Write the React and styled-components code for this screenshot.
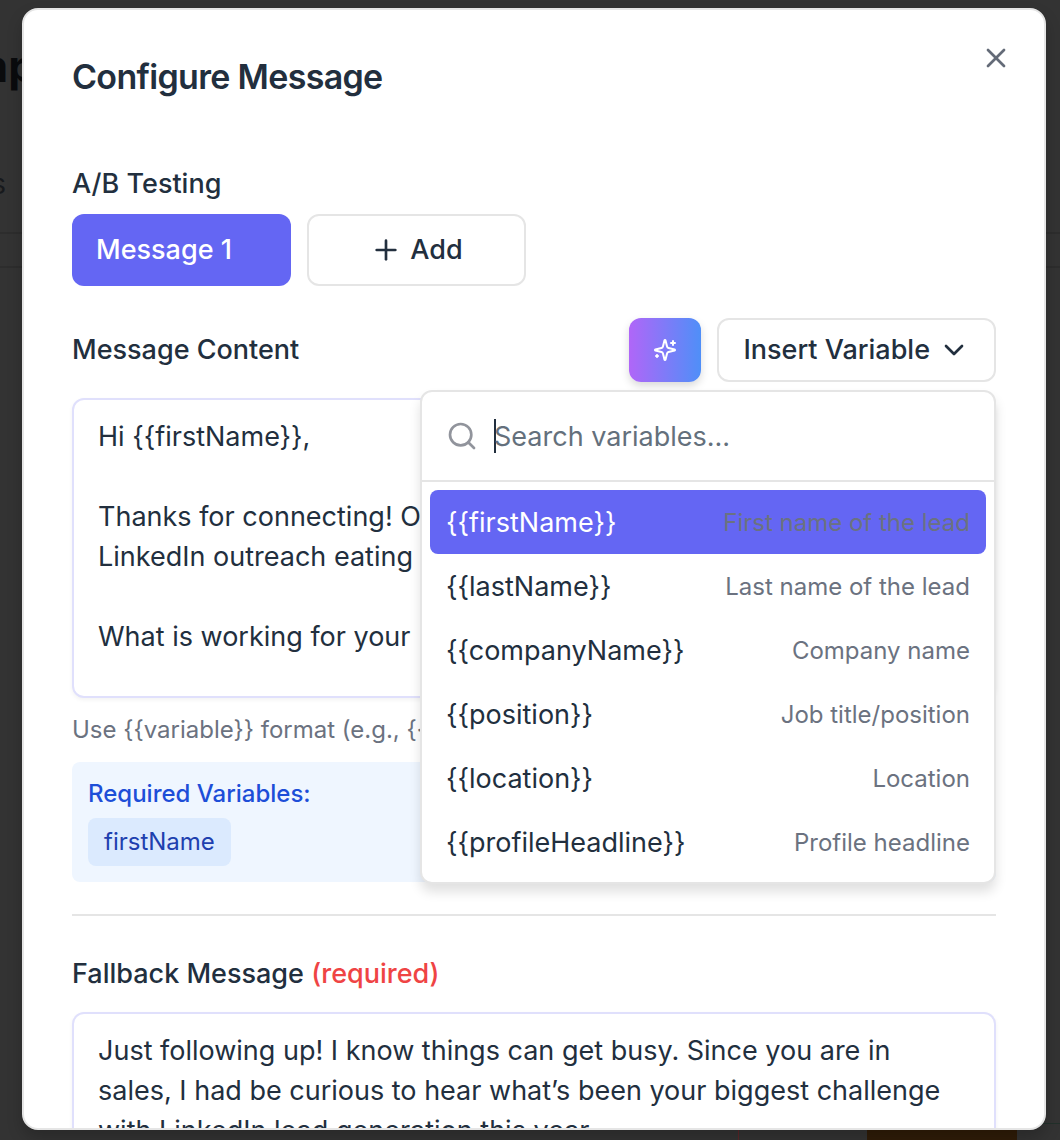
import React, { useState } from "react";
import styled, { createGlobalStyle, css } from "styled-components";
import { ChevronDown, Plus, Search, X } from "lucide-react";

const GlobalStyle = createGlobalStyle`
    *, *::before, *::after {
        box-sizing: border-box;
    }

    body {
        margin: 0;
        background: #333333;
        font-family: Inter, "Noto Sans", sans-serif;
        color: #222f3e;
    }

    button, input, textarea {
        font: inherit;
        color: inherit;
    }
`;

const Screen = styled.div`
    position: relative;
    height: 100vh;
    overflow: hidden;
    background: #333333;
`;

/* dimmed page that shows around the dialog */
const Backdrop = styled.div`
    position: absolute;
    inset: 0;
    overflow: hidden;
`;

const PageTitle = styled.div`
    display: flex;
    justify-content: flex-end;
    width: 36px;
    margin-top: 36px;
    color: #0a0b0d;
    font-size: 44px;
    line-height: 60px;
    font-weight: 700;
`;

const PageText = styled.div`
    display: flex;
    justify-content: flex-end;
    width: 6px;
    margin-top: 72px;
    color: #17191c;
    font-size: 28px;
    line-height: 32px;
`;

const PageRow = styled.div`
    height: 34px;
    border-top: 2px solid #2d2d2d;

    &:first-of-type {
        margin-top: 32px;
    }
`;

const PageTable = styled.section`
    display: flow-root;
`;

const PageFooter = styled.div`
    position: absolute;
    right: 0;
    bottom: 0;
    display: flex;
    justify-content: flex-end;
    width: 322px;
    height: 17px;
    padding-right: 43px;
    border-top: 1px solid #22302a;
    border-left: 1px solid #5c2528;
`;

const PageAction = styled.div`
    width: 150px;
    background: #2f1c08;
`;

const Overlay = styled.div`
    position: relative;
    display: flex;
    height: 100%;
    padding: 8px 14px 10px 22px;
`;

const Dialog = styled.section`
    position: relative;
    flex: 1;
    padding: 48px;
    overflow: hidden;
    background: #ffffff;
    border: 2px solid #e5e5e5;
    border-radius: 16px;
    box-shadow: 0 8px 16px rgba(0, 0, 0, 0.2);
`;

const CloseButton = styled.button`
    position: absolute;
    top: 32px;
    right: 32px;
    display: flex;
    padding: 0;
    background: none;
    border: 0;
    color: #646b78;
`;

const Title = styled.h2`
    margin: 0 0 74px;
    font-size: 34px;
    line-height: 38px;
    font-weight: 600;
    letter-spacing: -0.02em;
`;

const Label = styled.label`
    display: block;
    font-size: 27px;
    line-height: 28px;
    font-weight: 500;
`;

const Required = styled.span`
    color: #ef4444;
`;

const Tabs = styled.div`
    display: grid;
    grid-template-columns: repeat(4, 1fr);
    gap: 16px;
    margin: 16px 0 32px;
`;

const outline = css`
    background: #ffffff;
    border: 2px solid #e5e5e5;
`;

const Button = styled.button`
    display: flex;
    align-items: center;
    justify-content: center;
    gap: 8px;
    height: 64px;
    padding: 0 24px;
    border: 0;
    border-radius: 12px;
    font-size: 27px;
    line-height: 40px;
    font-weight: 500;
    ${props => props.$outline && outline}
`;

const TabButton = styled(Button)`
    height: 72px;
    ${props => props.$active && css`
        justify-content: flex-start;
        background: #6466f3;
        color: #ffffff;
    `}
`;

const AiButton = styled(Button)`
    width: 72px;
    background: linear-gradient(90deg, #b066f8, #4f8ff8);
    color: #ffffff;
    box-shadow: 0 4px 8px rgba(0, 0, 0, 0.15);
`;

const FieldHeader = styled.div`
    position: relative;
    display: flex;
    align-items: center;
    gap: 16px;
    margin-bottom: 16px;

    ${Label} {
        flex: 1;
    }
`;

const TextArea = styled.textarea`
    display: block;
    width: 100%;
    height: 300px;
    padding: 17px 24px;
    overflow: hidden;
    resize: none;
    outline: none;
    background: #ffffff;
    border: 2px solid #e0e0fc;
    border-radius: 12px;
    box-shadow: 0 2px 4px rgba(0, 0, 0, 0.05);
    font-size: 27px;
    line-height: 40px;
`;

const FallbackField = styled.div`
    display: grid;
    gap: 24px;
`;

const Hint = styled.p`
    margin: 16px 0;
    color: #6b7280;
    font-size: 24px;
    line-height: 32px;
`;

const RequiredBox = styled.div`
    padding: 16px;
    background: #eff6ff;
    border-radius: 8px;
    color: #1d4ed8;
    font-size: 24px;
    line-height: 32px;
    font-weight: 500;
`;

const Tag = styled.span`
    display: block;
    width: fit-content;
    margin-top: 8px;
    padding: 8px 16px;
    background: #dbeafe;
    border-radius: 8px;
    color: #1e40af;
    font-weight: 400;
`;

const Divider = styled.hr`
    height: 2px;
    margin: 32px 0 44px;
    background: #e5e5e5;
    border: 0;
`;

const Menu = styled.div`
    position: absolute;
    z-index: 2;
    top: calc(100% + 8px);
    right: 0;
    width: 576px;
    ${outline}
    border-radius: 12px;
    box-shadow: 0 8px 12px rgba(0, 0, 0, 0.12);
`;

const SearchRow = styled.label`
    display: flex;
    align-items: center;
    gap: 16px;
    height: 90px;
    padding: 0 24px;
    border-bottom: 2px solid #e5e5e5;
    color: #91949c;
`;

const SearchInput = styled.input`
    flex: 1;
    min-width: 0;
    padding: 2px 0 0;
    background: none;
    border: 0;
    outline: none;
    color: #222f3e;
    font-size: 27px;
    line-height: 40px;

    &::placeholder {
        color: #64707c;
        opacity: 1;
    }
`;

const Caret = styled.span`
    width: 2px;
    height: 34px;
    margin-right: -18px;
    background: #222f3e;
`;

const Options = styled.div`
    padding: 8px;
`;

const Option = styled.button`
    display: flex;
    align-items: center;
    justify-content: space-between;
    width: 100%;
    height: 64px;
    padding: 0 16px;
    background: ${props => props.$active ? "#6466f3" : "transparent"};
    border: 0;
    border-radius: 8px;
    color: ${props => props.$active ? "#ffffff" : "#222f3e"};
    font-size: 27px;
`;

const Description = styled.span`
    color: #6b7280;
    font-size: 24px;
`;

const variables = [
    { name: "firstName", description: "First name of the lead" },
    { name: "lastName", description: "Last name of the lead" },
    { name: "companyName", description: "Company name" },
    { name: "position", description: "Job title/position" },
    { name: "location", description: "Location" },
    { name: "profileHeadline", description: "Profile headline" },
];

const SparklesIcon = () => (
    <svg
        width="24"
        height="24"
        viewBox="0 0 24 24"
        fill="none"
        stroke="currentColor"
        strokeWidth="2"
        strokeLinecap="round"
        strokeLinejoin="round"
    >
        <path d="M9.937 15.5A2 2 0 0 0 8.5 14.063l-6.135-1.582a.5.5 0 0 1 0-.962L8.5 9.936A2 2 0 0 0 9.937 8.5l1.582-6.135a.5.5 0 0 1 .963 0L14.063 8.5A2 2 0 0 0 15.5 9.937l6.135 1.581a.5.5 0 0 1 0 .964L15.5 14.063a2 2 0 0 0-1.437 1.437l-1.582 6.135a.5.5 0 0 1-.963 0z" />
        <path d="M20 3v4" />
        <path d="M22 5h-4" />
        <path d="M4 17v2" />
        <path d="M5 18H3" />
    </svg>
);

const VariableMenu = () => {
    const [active, setActive] = useState("firstName");

    return (
        <Menu>
            <SearchRow>
                <Search size={32} strokeWidth={2} />
                <Caret />
                <SearchInput type="text" aria-label="Search variables" placeholder="Search variables..." />
            </SearchRow>
            <Options>
                {variables.map(({ name, description }) => (
                    <Option key={name} type="button" $active={name === active} onMouseEnter={() => setActive(name)}>
                        <span>{`{{${name}}}`}</span>
                        <Description>{description}</Description>
                    </Option>
                ))}
            </Options>
        </Menu>
    );
};

const App = () => {
    const [message, setMessage] = useState(
        "Hi {{firstName}},\n\nThanks for connecting! O\nLinkedIn outreach eating\n\nWhat is working for your"
    );
    const [fallback, setFallback] = useState(
        "Just following up! I know things can get busy. Since you are in sales, I had be curious to hear what’s been your biggest challenge with LinkedIn lead generation this year."
    );

    return (
        <Screen>
            <GlobalStyle />
            <Backdrop aria-hidden="true">
                <PageTitle>mp</PageTitle>
                <PageText>s</PageText>
                <PageTable>
                    <PageRow />
                    <PageRow />
                </PageTable>
                <PageFooter>
                    <PageAction />
                </PageFooter>
            </Backdrop>
            <Overlay>
                <Dialog role="dialog" aria-labelledby="dialog-title">
                    <CloseButton type="button" aria-label="Close">
                        <X size={32} strokeWidth={2} />
                    </CloseButton>
                    <Title id="dialog-title">Configure Message</Title>

                    <Label as="div">A/B Testing</Label>
                    <Tabs>
                        <TabButton type="button" $active>Message 1</TabButton>
                        <TabButton type="button" $outline>
                            <Plus size={32} strokeWidth={2} />
                            Add
                        </TabButton>
                    </Tabs>

                    <FieldHeader>
                        <Label htmlFor="message">Message Content</Label>
                        <AiButton type="button" aria-label="Write with AI">
                            <SparklesIcon />
                        </AiButton>
                        <Button type="button" $outline>
                            Insert Variable
                            <ChevronDown size={32} strokeWidth={2} />
                        </Button>
                        <VariableMenu />
                    </FieldHeader>
                    <TextArea id="message" value={message} onChange={e => setMessage(e.target.value)} />
                    <Hint>{"Use {{variable}} format (e.g., {{"}</Hint>
                    <RequiredBox>
                        Required Variables:
                        <Tag>firstName</Tag>
                    </RequiredBox>

                    <Divider />

                    <FallbackField>
                        <Label htmlFor="fallback">
                            Fallback Message <Required>(required)</Required>
                        </Label>
                        <TextArea id="fallback" value={fallback} onChange={e => setFallback(e.target.value)} />
                    </FallbackField>
                </Dialog>
            </Overlay>
        </Screen>
    );
};

export default App;
